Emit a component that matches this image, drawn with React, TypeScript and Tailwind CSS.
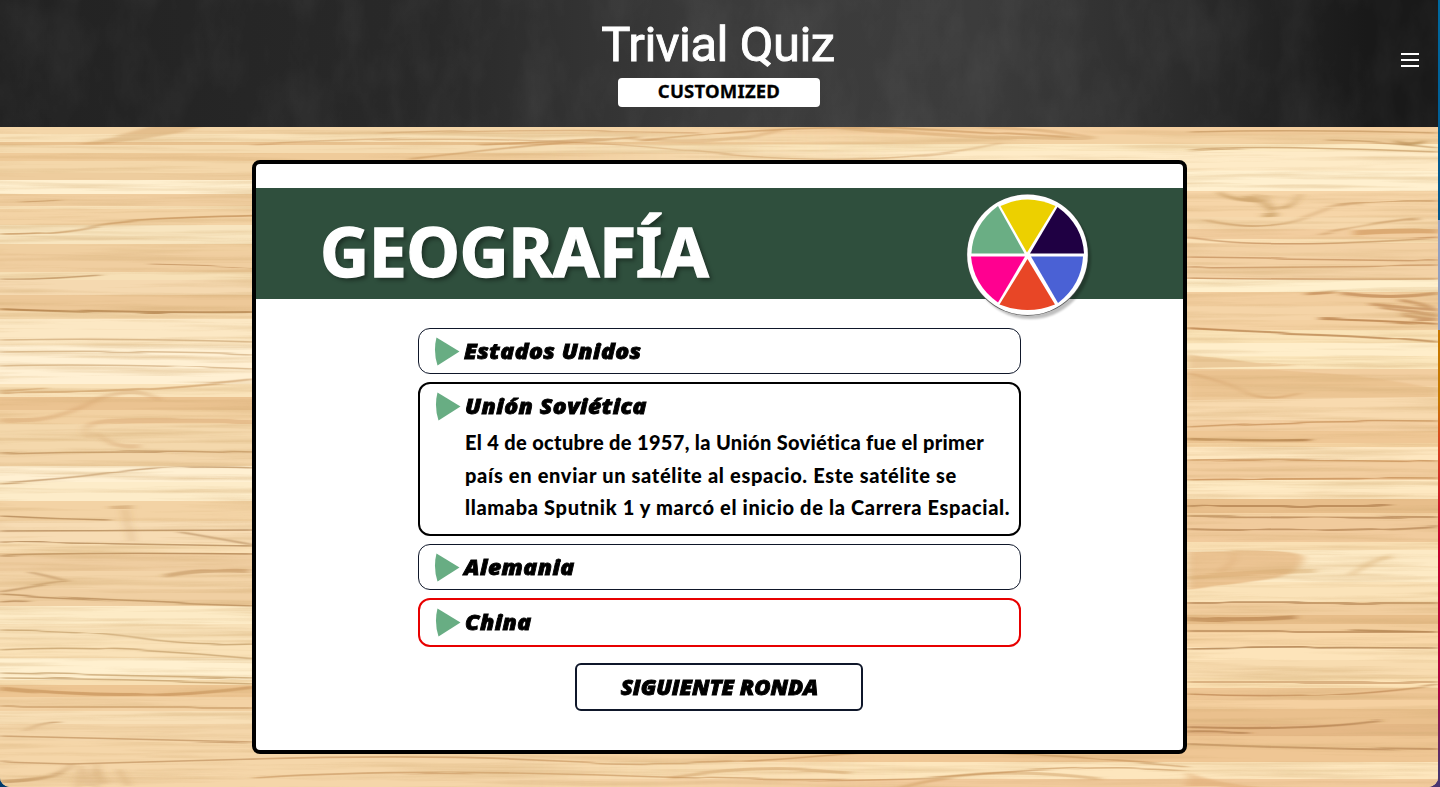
import React from "react";

type Band = [number, number, string];
type Streak = [string, string, number, number];

const leftBands: Band[] = [
  [127, 7, "#f4d6a9"], [134, 8, "#f9e2b9"], [142, 3, "#e9c290"], [145, 8, "#f5dbb0"], [153, 8, "#efcb9a"],
  [161, 12, "#f4d7aa"], [173, 7, "#eecd9e"], [180, 14, "#fff0d0"], [194, 12, "#f0cea0"], [206, 3, "#f8e0b6"],
  [209, 16, "#f3d3a5"], [225, 19, "#f8e5bf"], [244, 8, "#f0cfa0"], [252, 20, "#f0cea0"], [272, 8, "#f7e0b6"],
  [280, 15, "#f5d9b0"], [295, 16, "#edc898"], [311, 8, "#f4d8ac"], [319, 26, "#fce8c4"], [345, 13, "#fff0d3"],
  [358, 26, "#fff0d3"], [384, 13, "#fae3ba"], [397, 13, "#ebc391"], [410, 14, "#f2d1a2"], [424, 28, "#f4d8ac"],
  [452, 14, "#f3d5a9"], [466, 16, "#fff0d2"], [482, 19, "#fdecc9"], [501, 20, "#f3d3a5"], [521, 22, "#f7dcb4"],
  [543, 10, "#fae0b6"], [553, 18, "#efcda0"], [571, 18, "#f3d4a8"], [589, 17, "#f0cfa2"], [606, 18, "#fdebc6"],
  [624, 16, "#f8e1b8"], [640, 18, "#fae2b8"], [658, 22, "#fff0cf"], [680, 5, "#f8dfb3"], [685, 12, "#edc592"],
  [697, 14, "#f3d2a4"], [711, 13, "#f8dfb6"], [724, 17, "#f4d6aa"], [741, 19, "#f5d6a9"], [760, 27, "#f5d6a9"],
];
const rightBands: Band[] = [
  [127, 8, "#f4cfa0"], [135, 9, "#f3d2a3"], [144, 7, "#fdeac2"], [151, 20, "#feebc7"], [171, 20, "#fff0cf"],
  [191, 26, "#f6d5a8"], [217, 12, "#f6d8ac"], [229, 10, "#f2cd9f"], [239, 4, "#fbe1b6"], [243, 14, "#f3d1a4"],
  [257, 9, "#f3d1a4"], [266, 13, "#f3d2a6"], [279, 13, "#fff0cd"], [292, 14, "#f2ce9f"], [306, 14, "#f5d4a7"],
  [320, 10, "#f4d1a2"], [330, 13, "#fae3b7"], [343, 13, "#ffeeca"], [356, 13, "#fce8be"], [369, 17, "#f2cea0"],
  [386, 11, "#f4d3a5"], [397, 23, "#f8daaf"], [420, 11, "#f4d0a3"], [431, 12, "#efc795"], [443, 4, "#f5d3a2"],
  [447, 13, "#fee7c0"], [460, 20, "#f2cd9f"], [480, 10, "#feeac3"], [490, 9, "#fee8c1"], [499, 14, "#e8be8b"],
  [513, 4, "#f5d2a3"], [517, 25, "#f1cb9d"], [542, 8, "#fae0b4"], [550, 32, "#fdeac5"], [582, 20, "#fbe3b9"],
  [602, 13, "#f1cd9e"], [615, 9, "#e7bd89"], [624, 9, "#f2cd9c"], [633, 14, "#f9d8a9"], [647, 13, "#fde4ba"],
  [660, 18, "#f8dcb0"], [678, 10, "#fde3b6"], [688, 12, "#efc796"], [700, 9, "#f5d0a0"], [709, 15, "#eac08d"],
  [724, 12, "#e5b886"], [736, 26, "#efc694"], [762, 17, "#fde6bd"], [779, 8, "#f1ca9c"],
];

const streaks: Streak[] = [
  ["M80 143Q110 139 150 127L200 127Q150 138 100 143Z", "#c78f55", 0.35, 1],
  ["M0 234Q60 234 95 226T300 216", "#b98145", 0.6, 1.6],
  ["M0 279Q40 280 100 275", "#a8753f", 0.6, 1.4],
  ["M0 309Q110 314 255 313", "#ab7840", 0.75, 2],
  ["M20 202Q50 201 60 200M150 265Q210 266 260 269", "#b27d48", 0.6, 1.2],
  ["M0 340Q120 338 255 342M0 366Q90 363 255 369M0 352Q120 350 255 354", "#cba574", 0.65, 1.5],
  ["M0 392Q120 394 255 379M0 390L45 388", "#bd8347", 0.5, 2],
  ["M0 420Q50 426 90 404T160 400M90 438Q75 424 110 422T255 421M95 432Q110 449 140 446", "#c48a50", 0.28, 4],
  ["M0 453Q130 449 255 453M0 483Q80 478 120 471T255 467", "#a6713c", 0.55, 1.5],
  ["M0 516Q55 519 110 520M180 532L255 545M0 531Q100 531 255 530M0 542L255 546", "#93602f", 0.55, 1.5],
  ["M110 507L132 506M125 510L132 541", "#a9733c", 0.3, 4],
  ["M0 555Q100 552 255 554M0 594Q100 600 255 605M0 602L28 600M30 572L67 581L0 592", "#9d6b37", 0.58, 1.5],
  ["M165 576Q200 569 250 571", "#a8713a", 0.4, 4],
  ["M0 630Q90 630 140 638T255 643M0 650Q100 644 255 659M0 678Q120 679 255 683M0 673L255 678", "#bf9864", 0.7, 1.5],
  ["M0 688Q140 702 255 686", "#b87d40", 0.5, 3],
  ["M0 707H255M0 736Q110 739 255 742M25 731Q40 722 60 722M0 762L70 764L255 759", "#b78652", 0.6, 1.5],
  ["M0 781Q60 780 72 764M78 787L81 766M88 786L87 769M96 787L97 764M104 784L99 769M120 769L128 787", "#a9763e", 0.5, 2.4],
  ["M480 145Q590 140 640 136M640 141Q800 122 900 128T1070 138M410 159Q550 142 610 140", "#bd8347", 0.45, 1.8],
  ["M630 138Q720 147 780 129M840 127Q1010 142 1095 139Q1030 128 980 127", "#c38a51", 0.3, 3],
  ["M253 145Q500 131 690 151T1000 143M380 134Q540 128 700 132", "#cc9a63", 0.5, 1.3],
  ["M1190 132Q1300 129 1438 133M1327 141Q1385 142 1438 148M1190 150Q1240 144 1438 152", "#ba8b51", 0.6, 1.6],
  ["M1395 141Q1410 147 1425 141", "#9f6f32", 0.5, 3],
  ["M1220 192Q1230 201 1264 201M1255 193Q1265 212 1275 208M1300 193Q1295 207 1280 208M1244 197Q1260 197 1273 215M1265 195L1270 207M1262 215L1276 214", "#a87536", 0.45, 3.2],
  ["M1340 207Q1360 201 1438 202M1205 219Q1265 233 1310 215T1360 207M1320 235Q1360 225 1420 219", "#b78147", 0.5, 1.8],
  ["M1187 237Q1260 250 1438 238M1187 257L1438 260M1187 278Q1300 280 1438 279M1187 267L1438 265", "#b57944", 0.55, 1.6],
  ["M1355 234Q1400 231 1438 232", "#bb7530", 0.4, 5],
  ["M1306 294L1335 292M1340 294Q1390 301 1438 294M1370 304L1438 311M1400 301Q1430 306 1438 313M1402 315L1438 320M1415 320L1438 319M1380 308L1438 316", "#a66227", 0.48, 3],
  ["M1187 328Q1260 332 1320 334T1438 342M1320 319Q1370 320 1438 324", "#a5652c", 0.6, 2],
  ["M1187 353Q1250 364 1302 366L1187 368Z", "#d39c62", 0.4, 0],
  ["M1187 373Q1225 381 1245 392T1300 393", "#b57a3f", 0.45, 2],
  ["M1275 370L1365 376Q1400 380 1438 388V397L1187 400V371Z", "#e5b781", 0.5, 0],
  ["M1187 439Q1250 441 1310 440", "#9b642c", 0.6, 2.4],
  ["M1187 427Q1300 420 1438 422M1187 460Q1300 458 1438 461M1187 480Q1300 478 1438 479", "#ba7e42", 0.6, 1.6],
  ["M1187 506L1390 506M1187 516L1438 517M1210 517L1237 516M1187 529Q1330 533 1438 526", "#976331", 0.5, 1.8],
  ["M1187 551Q1300 548 1305 557Q1304 573 1270 579L1187 590Z", "#e4b47d", 0.7, 0],
  ["M1220 573Q1237 562 1235 552", "#c88b50", 0.45, 2],
  ["M1350 575Q1370 562 1392 555M1187 578Q1250 573 1315 571", "#d3a468", 0.4, 4],
  ["M1187 619Q1240 622 1296 618", "#a56b36", 0.5, 4],
  ["M1187 603H1438M1187 632H1438M1350 630L1438 632M1187 649Q1300 647 1438 648", "#945f2f", 0.6, 1.7],
  ["M1187 682H1438M1187 694Q1330 700 1438 684", "#ab6f38", 0.55, 1.7],
  ["M1187 727Q1300 731 1380 721M1187 732L1250 733M1187 744Q1310 749 1438 750", "#8e5829", 0.42, 2.2],
  ["M1187 772Q1215 783 1260 787H1187Z", "#dfa870", 0.5, 0],
  ["M253 759Q430 754 560 761T820 756T1187 766M253 778Q400 768 630 776T980 774T1187 770", "#b98247", 0.5, 1.7],
  ["M670 778Q760 764 850 773M900 787Q980 764 1100 779", "#bd8142", 0.35, 3],
];

function Wood() {
  return (
    <svg className="absolute inset-0 h-full w-full" viewBox="0 127 1438 660" preserveAspectRatio="none" aria-hidden="true">
      <defs>
        <linearGradient id="fade" x1="0.35" x2="0.65" y1="0" y2="0">
          <stop offset="0" stopColor="#000" />
          <stop offset="1" stopColor="#fff" />
        </linearGradient>
        <mask id="rightHalf" maskUnits="userSpaceOnUse" x="0" y="127" width="1438" height="660">
          <rect y="127" width="1438" height="660" fill="url(#fade)" />
        </mask>
        <filter id="soften" x="0" y="0" width="1" height="1">
          <feTurbulence type="fractalNoise" baseFrequency="0.006 0.04" numOctaves="2" seed="4" />
          <feDisplacementMap in="SourceGraphic" scale="4" yChannelSelector="G" xChannelSelector="R" />
          <feGaussianBlur stdDeviation="4 0.55" />
        </filter>
        <filter id="grain" x="0" y="0" width="1" height="1">
          <feTurbulence type="fractalNoise" baseFrequency="0.005 0.16" numOctaves="4" seed="11" />
          <feColorMatrix values="0 0 0 0 0.66  0 0 0 0 0.42  0 0 0 0 0.18  2.6 0 0 0 -1.1" />
        </filter>
      </defs>
      <rect y="127" width="1438" height="660" fill="#f4d5a8" />
      <g>
        {leftBands.map(([y, h, fill]) => <rect key={y} y={y} width="1438" height={h + 0.5} fill={fill} />)}
      </g>
      <g mask="url(#rightHalf)">
        {rightBands.map(([y, h, fill]) => <rect key={y} y={y} width="1438" height={h + 0.5} fill={fill} />)}
      </g>
      <g filter="url(#soften)">
        <rect y="127" width="1438" height="660" fill="none" />
        {streaks.map(([d, color, opacity, width], i) => (
          <path key={i} d={d} fill={d.endsWith("Z") ? color : "none"} stroke={color} strokeWidth={width} opacity={opacity} />
        ))}
      </g>
      <rect y="127" width="1438" height="660" filter="url(#grain)" opacity="0.42" />
    </svg>
  );
}

function Chalk() {
  return (
    <svg className="absolute inset-0 h-full w-full" aria-hidden="true">
      <defs>
        <filter id="chalk" x="0" y="0" width="1" height="1">
          <feTurbulence type="fractalNoise" baseFrequency="0.025 0.012" numOctaves="5" seed="8" />
          <feColorMatrix values="0 0 0 0 1  0 0 0 0 1  0 0 0 0 1  0.6 0 0 0 -0.22" />
        </filter>
      </defs>
      <rect width="100%" height="100%" filter="url(#chalk)" opacity="0.15" />
    </svg>
  );
}

function Wheel() {
  return (
    <svg className="h-[130px] w-[130px] overflow-visible" viewBox="-64.5 -65 130 130" aria-hidden="true">
      <circle cx="3" cy="3.5" r="60.5" fill="#000" opacity="0.25" className="blur-[1px]" />
      <circle r="60.7" fill="#555" />
      <circle cy="-0.3" r="60.3" fill="#fff" />
      <path d="M-0.5-2.5L-27-49Q0-62 28-49Z" fill="#ecd000" />
      <path d="M2.5-1.5L30-48Q55-30 56.500-1.500Z" fill="#1f0043" />
      <path d="M3.500 1.500H55.500Q54 30 30.500 48Z" fill="#4a61d5" />
      <path d="M0 4L27.500 49.500Q0 60.500-28 49.500Z" fill="#e84626" />
      <path d="M-2.500 1.500L-29.500 47.500Q-54 30-56.500 1.500Z" fill="#ff0090" />
      <path d="M-3-1.500L-29.500-49Q-55-30-56-1.500Z" fill="#6aae84" />
    </svg>
  );
}

function Wedge() {
  return (
    <svg className="h-[29px] w-[26px] shrink-0" viewBox="0 0 26 29" aria-hidden="true">
      <path d="M2.500 0.500L25.500 14.500L3.500 28.500Q-1 14.500 2.500 0.500Z" fill="#68ad83" />
    </svg>
  );
}

const labelFont = "inline-block origin-left font-['Open_Sans',sans-serif] text-[20.5px] leading-[28px] font-extrabold italic text-black whitespace-nowrap scale-x-[1.12] tracking-[0.4px] [-webkit-text-stroke:0.8px_black]";

export default function App() {
  return (
    <div className="flex h-[787px] w-full overflow-hidden bg-[linear-gradient(90deg,#003a6b_50%,#4a3570_50%)]">
      <div className="flex min-w-0 flex-1 flex-col overflow-hidden rounded-b-[10px]">
        <header className="relative h-[127px] shrink-0 bg-[linear-gradient(90deg,#222,#292929_30%,#3b3b3b_50%,#3c3c3c_68%,#2c2c2c_82%,#191919_95%)]">
          <Chalk />
          <div className="relative flex h-full flex-col items-center pt-[16px]">
            <h1 className="mr-[2px] h-[62px] font-[Roboto,sans-serif] text-[49px] leading-[58px] tracking-[-0.5px] whitespace-nowrap text-white [-webkit-text-stroke:0.9px_white]">Trivial Quiz</h1>
            <div className="flex h-[29px] w-[202px] justify-center rounded bg-white font-['Noto_Sans',sans-serif] text-[18.5px] leading-[26px] font-bold tracking-[0.2px] text-black [-webkit-text-stroke:0.3px_black]">CUSTOMIZED</div>
          </div>
          <button aria-label="Menu" className="absolute top-[53px] right-[19px] flex w-[18px] flex-col gap-[4px]">
            <span className="h-[2px] bg-white" />
            <span className="h-[2px] bg-white" />
            <span className="h-[2px] bg-white" />
          </button>
        </header>
        <main className="relative flex flex-1 justify-center pt-[33px]">
          <Wood />
          <section className="relative ml-px flex h-[594px] w-[935px] flex-col items-center rounded-lg border-4 border-black bg-white pt-[24px]">
            <div className="flex h-[111px] w-full justify-between bg-[#2f4f3d] pr-[90px] pl-[64px]">
              <h2 className="pt-[16px] font-['Noto_Sans',sans-serif] text-[68px] leading-[94px] font-bold tracking-[-0.5px] whitespace-nowrap text-white [-webkit-text-stroke:1.3px_white] [text-shadow:3px_3px_4px_rgba(0,0,0,0.4)]">GEOGRAFÍA</h2>
              <div className="mt-[2px] h-[130px] w-[130px]"><Wheel /></div>
            </div>
            <div className="mt-[29px] flex w-[603px] flex-col gap-[8px]">
              <div className="flex h-[46px] items-start rounded-xl border border-[#0f172a] pt-[8px] pl-[15px]">
                <Wedge /><span className={`${labelFont} ml-[4px]`}>Estados Unidos</span>
              </div>
              <div className="flex h-[154px] items-start rounded-xl border-2 border-black pt-[8px] pl-[15px]">
                <Wedge />
                <div className="ml-[4px]">
                  <div className={labelFont}>Unión Soviética</div>
                  <p className="mt-[6px] flex flex-col font-[Lato,sans-serif] text-[20px] leading-[32.5px] font-black whitespace-nowrap text-black">
                    <span className="tracking-[0.33px]">El 4 de octubre de 1957, la Unión Soviética fue el primer</span>
                    <span className="tracking-[0.67px]">país en enviar un satélite al espacio. Este satélite se</span>
                    <span className="tracking-[0.65px]">llamaba Sputnik 1 y marcó el inicio de la Carrera Espacial.</span>
                  </p>
                </div>
              </div>
              <div className="flex h-[46px] items-start rounded-xl border border-[#0f172a] pt-[8px] pl-[15px]">
                <Wedge /><span className={`${labelFont} ml-[4px]`}>Alemania</span>
              </div>
              <div className="flex h-[49px] items-start rounded-xl border-2 border-[#e80000] pt-[8px] pl-[15px]">
                <Wedge /><span className={`${labelFont} ml-[4px]`}>China</span>
              </div>
            </div>
            <button className="mt-[16px] mr-[2px] flex h-[48px] w-[288px] items-center justify-center rounded-md border-2 border-[#0f172a] bg-white">
              <span className="scale-x-[1.08] pl-px font-['Open_Sans',sans-serif] text-[20.5px] leading-[28px] font-extrabold whitespace-nowrap text-black italic [-webkit-text-stroke:0.9px_black]">SIGUIENTE RONDA</span>
            </button>
          </section>
        </main>
      </div>
      <div className="w-[2px] shrink-0 bg-[linear-gradient(180deg,#006aa0_0,#00568f_220px,#909fc3_220px,#909fc3_330px,#c77800_330px,#c77800_400px,#dc4520_440px,#c80030_540px,#b00045_690px,#4a3570_770px)]" />
    </div>
  );
}
